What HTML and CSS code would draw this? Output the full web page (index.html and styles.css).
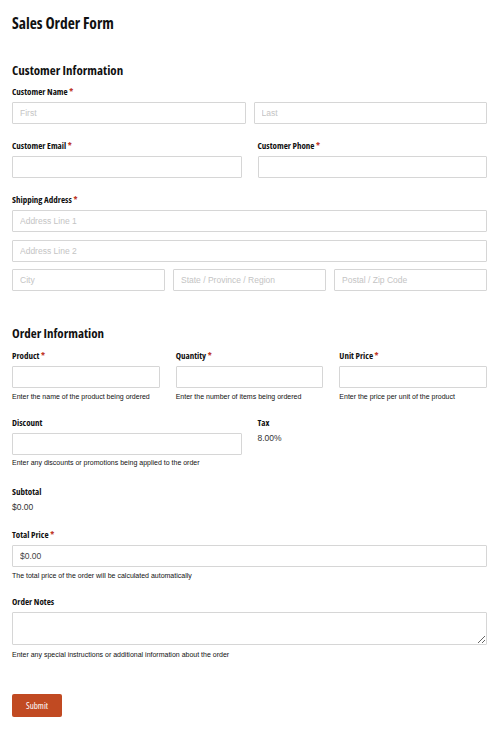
FILE: index.html
```html
<!DOCTYPE html>
<html lang="en">
<head>
  <meta charset="UTF-8">
  <title>Sales Order Form</title>
  <link rel="stylesheet" href="styles.css">
</head>
<body>
  <form class="form">
    <h1>Sales Order Form</h1>

    <h2>Customer Information</h2>
    <div class="field">
      <label>Customer Name <span class="req">*</span></label>
      <div class="row two tight">
        <input type="text" placeholder="First">
        <input type="text" placeholder="Last">
      </div>
    </div>

    <div class="row two">
      <div class="field">
        <label>Customer Email <span class="req">*</span></label>
        <input type="text">
      </div>
      <div class="field">
        <label>Customer Phone <span class="req">*</span></label>
        <input type="text">
      </div>
    </div>

    <div class="field">
      <label>Shipping Address <span class="req">*</span></label>
      <input type="text" class="stack" placeholder="Address Line 1">
      <input type="text" class="stack last" placeholder="Address Line 2">
      <div class="row three tight">
        <input type="text" placeholder="City">
        <input type="text" placeholder="State / Province / Region">
        <input type="text" placeholder="Postal / Zip Code">
      </div>
    </div>

    <h2 class="section">Order Information</h2>
    <div class="row three">
      <div class="field">
        <label>Product <span class="req">*</span></label>
        <input type="text">
        <div class="help">Enter the name of the product being ordered</div>
      </div>
      <div class="field">
        <label>Quantity <span class="req">*</span></label>
        <input type="text">
        <div class="help">Enter the number of items being ordered</div>
      </div>
      <div class="field">
        <label>Unit Price <span class="req">*</span></label>
        <input type="text">
        <div class="help">Enter the price per unit of the product</div>
      </div>
    </div>

    <div class="row two">
      <div class="field">
        <label>Discount</label>
        <input type="text">
        <div class="help">Enter any discounts or promotions being applied to the order</div>
      </div>
      <div class="field">
        <label>Tax</label>
        <div class="value">8.00%</div>
      </div>
    </div>

    <div class="field subtotal">
      <label>Subtotal</label>
      <div class="value">$0.00</div>
    </div>

    <div class="field">
      <label>Total Price <span class="req">*</span></label>
      <input type="text" value="$0.00">
      <div class="help">The total price of the order will be calculated automatically</div>
    </div>

    <div class="field notes">
      <label>Order Notes</label>
      <textarea></textarea>
      <div class="help">Enter any special instructions or additional information about the order</div>
    </div>

    <button type="button" class="submit">Submit</button>
  </form>
</body>
</html>
```

FILE: styles.css
```css
body {
  margin: 0;
  padding: 0 13px 0 12px;
  background: #fff;
  color: #222;
  font-family: "Liberation Sans", Arial, sans-serif;
}

h1, h2, label, .submit {
  font-family: "Open Sans", sans-serif;
  font-stretch: condensed;
  font-weight: 700;
  color: #111;
}

h1 { font-size: 15.5px; margin: 12px 0 0; line-height: 22px; }
h2 { font-size: 13px; margin: 26px 0 6px; line-height: 20px; }
h2.section { margin-top: 32px; margin-bottom: 7px; }

.field { margin-bottom: 16px; }
.field label { display: block; font-size: 9px; line-height: 12px; margin-bottom: 4px; }
.req { color: #c0392b; }

input, textarea {
  display: block;
  box-sizing: border-box;
  width: 100%;
  height: 22px;
  margin: 0;
  padding: 0 7px;
  border: 1px solid #d6d6d6;
  border-radius: 1px;
  font-family: "Liberation Sans", Arial, sans-serif;
  font-size: 8.5px;
  color: #444;
  background: #fff;
}
input::placeholder { color: #c4c4c4; }
input.stack { margin-bottom: 8px; }
input.stack.last { margin-bottom: 7px; }
textarea { height: 33px; resize: vertical; }

.row { display: grid; gap: 16px; }
.row.two { grid-template-columns: 1fr 1fr; }
.row.three { grid-template-columns: 1fr 1fr 1fr; }
.row.tight { gap: 8px; }

.help { font-size: 7px; line-height: 9px; color: #111; margin-top: 3.5px; }
.notes .help { margin-top: 5.5px; }
.value { font-size: 8.5px; line-height: 10px; color: #333; }
.subtotal { margin-top: 3px; margin-bottom: 17px; }

.submit {
  display: block;
  margin-top: 35px;
  width: 50px;
  height: 23px;
  border: none;
  border-radius: 2px;
  background: #c14a22;
  color: #fff;
  font-size: 9px;
  font-weight: 400;
}
```
